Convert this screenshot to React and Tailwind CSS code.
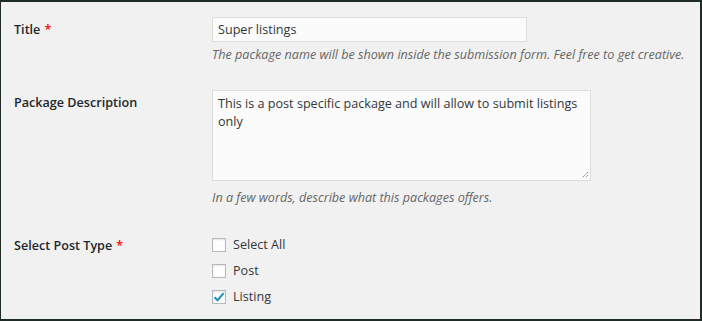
import React from "react";

const checkboxes = [
  { label: "Select All", checked: false },
  { label: "Post", checked: false },
  { label: "Listing", checked: true },
];

const Label = ({ children, required, className }) => (
  <div className={`w-[198px] shrink-0 font-semibold text-[#23282d] ${className}`}>
    {children}
    {required && <span className="ml-1 text-[#ff0000]">*</span>}
  </div>
);

const Box = ({ checked }) => (
  <span className="flex h-[14px] w-[14px] items-center justify-center border border-[#b4b9be] bg-[#fefefe] shadow-[inset_0_1px_2px_rgba(0,0,0,0.1)]">
    {checked && (
      <svg width="12" height="12" viewBox="0 0 12 12">
        <path d="M1.5 6.2 L4.6 9.2 L10.6 2.2" fill="none" stroke="#1e8cbe" strokeWidth="2" />
      </svg>
    )}
  </span>
);

export default function App() {
  return (
    <div
      className="h-[321px] w-[702px] border-t-2 border-r-2 border-b-2 border-l border-[#1f2b27] bg-[#f1f1f1] pl-[13px] text-[12.6px] leading-[18px]"
      style={{ fontFamily: '"Open Sans", "Noto Sans", sans-serif' }}
    >
      <div className="flex pt-[15px]">
        <Label required className="pt-[4px]">Title</Label>
        <div>
          <div className="flex h-[25px] w-[315px] items-center border border-[#dddddd] bg-[#fbfbfb] px-[5px] pt-[1px] text-[#32373c]">
            Super listings
          </div>
          <p className="mt-[4px] italic text-[#666]">
            The package name will be shown inside the submission form. Feel free to get creative.
          </p>
        </div>
      </div>

      <div className="flex pt-[26px]">
        <Label className="pt-[4px]">Package Description</Label>
        <div>
          <div className="relative h-[91px] w-[379px] border border-[#dddddd] bg-[#fbfbfb] px-[5px] pt-[4px] text-[#32373c]">
            This is a post specific package and will allow to submit listings only
            <svg className="absolute bottom-[1px] right-[1px]" width="8" height="8" viewBox="0 0 8 8">
              <path d="M7 1 L1 7 M7 4 L4 7" stroke="#666" strokeWidth="1" strokeDasharray="1 1" />
            </svg>
          </div>
          <p className="mt-[8px] italic text-[#666]">
            In a few words, describe what this packages offers.
          </p>
        </div>
      </div>

      <div className="flex pt-[29px]">
        <Label required className="pt-[1px]">Select Post Type</Label>
        <div className="flex flex-col gap-[8px]">
          {checkboxes.map((c) => (
            <div key={c.label} className="flex items-center gap-[7px] text-[#32373c]">
              <Box checked={c.checked} />
              <span>{c.label}</span>
            </div>
          ))}
        </div>
      </div>
    </div>
  );
}
